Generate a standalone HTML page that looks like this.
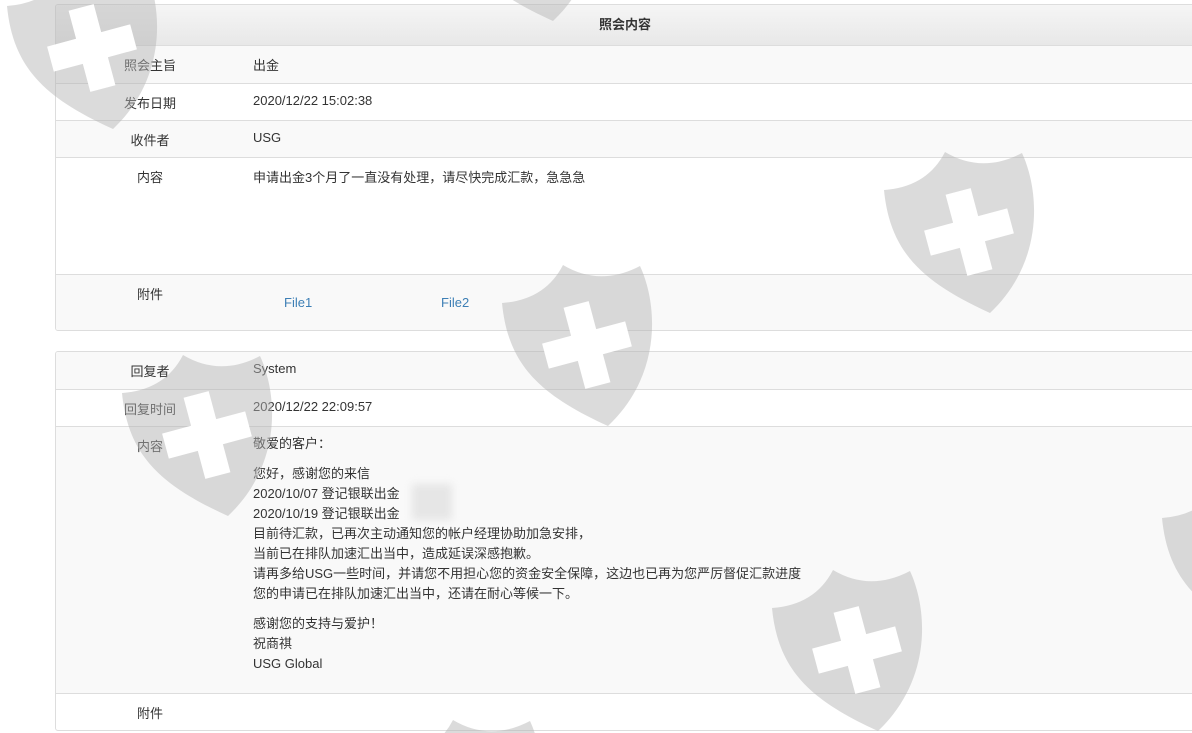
<!DOCTYPE html>
<html><head><meta charset="utf-8"><style>
body{margin:0;width:1192px;height:733px;overflow:hidden;background:#fff;font-family:"Liberation Sans","Noto Sans CJK SC",sans-serif;font-size:13px;color:#333;position:relative}
.panel{position:absolute;left:55px;width:1140px;border:1px solid #ddd;border-radius:3px;box-sizing:border-box;background:#fff;overflow:hidden}
.hd{height:40px;background:linear-gradient(#f5f5f5,#e8e8e8);border-bottom:1px solid #ddd;text-align:center;font-weight:bold;line-height:40px}
.row{position:relative;border-top:1px solid #ddd;box-sizing:border-box}
.row:first-child{border-top:none}
.s{background:#f9f9f9}
.lb{position:absolute;left:0;width:188px;text-align:center;top:9px}
.v{position:absolute;left:197px;top:9px}
.ct{line-height:20px}
a{color:#3d7fb5;text-decoration:none;position:absolute;top:20px}
</style></head><body>
<div class="panel" style="top:4px;height:327px">
<div class="hd">照会内容</div>
<div class="row s" style="height:37px;border-top:none"><span class="lb">照会主旨</span><span class="v">出金</span></div>
<div class="row" style="height:37px"><span class="lb">发布日期</span><span class="v">2020/12/22 15:02:38</span></div>
<div class="row s" style="height:37px"><span class="lb">收件者</span><span class="v">USG</span></div>
<div class="row" style="height:117px"><span class="lb">内容</span><span class="v">申请出金3个月了一直没有处理，请尽快完成汇款，急急急</span></div>
<div class="row s" style="height:56px"><span class="lb">附件</span><a style="left:228px">File1</a><a style="left:385px">File2</a></div>
</div>
<div class="panel" style="top:351px;height:380px">
<div class="row s" style="height:37px"><span class="lb">回复者</span><span class="v">System</span></div>
<div class="row" style="height:37px"><span class="lb">回复时间</span><span class="v">2020/12/22 22:09:57</span></div>
<div class="row s" style="height:267px"><span class="lb">内容</span><div class="v ct" style="top:7px">敬爱的客户：<div style="height:10px"></div>您好，感谢您的来信<br>2020/10/07 登记银联出金<br>2020/10/19 登记银联出金<br>目前待汇款，已再次主动通知您的帐户经理协助加急安排，<br>当前已在排队加速汇出当中，造成延误深感抱歉。<br>请再多给USG一些时间，并请您不用担心您的资金安全保障，这边也已再为您严厉督促汇款进度<br>您的申请已在排队加速汇出当中，还请在耐心等候一下。<div style="height:10px"></div>感谢您的支持与爱护！<br>祝商祺<br>USG Global</div></div>
<div class="row" style="height:37px"><span class="lb">附件</span></div>
</div>
<div style="position:absolute;left:412px;top:484px;width:40px;height:36px;background:rgba(225,225,225,.8);filter:blur(4px)"></div>
<svg width="1192" height="733" style="position:absolute;left:0;top:0;pointer-events:none">
<defs><g id="sh"><path d="M-78,-42 Q-35,-45 -17,-80 Q20,-58 60,-79 C78,-40 82,30 28,81 C-40,50 -72,20 -78,-42Z" fill="rgba(180,180,180,.48)"/><g transform="translate(7,0) rotate(-15)"><path d="M-13,-42 h26 v29 h30 v26 h-30 v29 h-26 v-29 h-30 v-26 h30z" fill="#fff"/></g></g></defs>
<use href="#sh" transform="translate(85,48)"/>
<use href="#sh" transform="translate(525,-60)"/>
<use href="#sh" transform="translate(962,232)"/>
<use href="#sh" transform="translate(580,345)"/>
<use href="#sh" transform="translate(200,435)"/>
<use href="#sh" transform="translate(850,650)"/>
<use href="#sh" transform="translate(1240,560)"/>
<use href="#sh" transform="translate(470,800)"/>
</svg>
</body></html>
